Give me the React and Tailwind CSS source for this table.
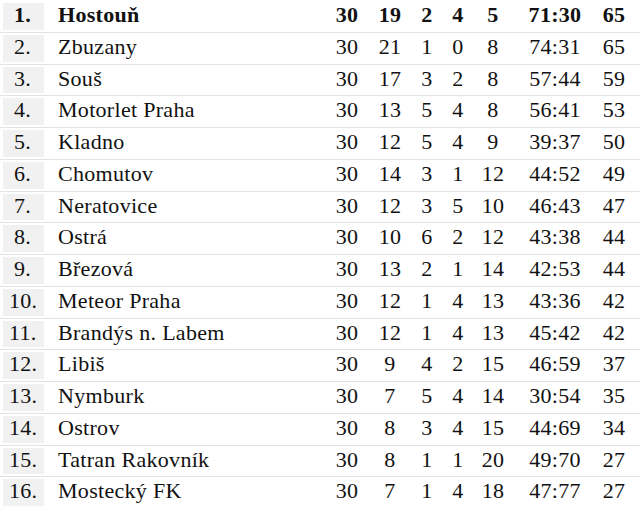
import React from "react";

const rows = [
  ["1.", "Hostouň", "30", "19", "2", "4", "5", "71:30", "65"],
  ["2.", "Zbuzany", "30", "21", "1", "0", "8", "74:31", "65"],
  ["3.", "Souš", "30", "17", "3", "2", "8", "57:44", "59"],
  ["4.", "Motorlet Praha", "30", "13", "5", "4", "8", "56:41", "53"],
  ["5.", "Kladno", "30", "12", "5", "4", "9", "39:37", "50"],
  ["6.", "Chomutov", "30", "14", "3", "1", "12", "44:52", "49"],
  ["7.", "Neratovice", "30", "12", "3", "5", "10", "46:43", "47"],
  ["8.", "Ostrá", "30", "10", "6", "2", "12", "43:38", "44"],
  ["9.", "Březová", "30", "13", "2", "1", "14", "42:53", "44"],
  ["10.", "Meteor Praha", "30", "12", "1", "4", "13", "43:36", "42"],
  ["11.", "Brandýs n. Labem", "30", "12", "1", "4", "13", "45:42", "42"],
  ["12.", "Libiš", "30", "9", "4", "2", "15", "46:59", "37"],
  ["13.", "Nymburk", "30", "7", "5", "4", "14", "30:54", "35"],
  ["14.", "Ostrov", "30", "8", "3", "4", "15", "44:69", "34"],
  ["15.", "Tatran Rakovník", "30", "8", "1", "1", "20", "49:70", "27"],
  ["16.", "Mostecký FK", "30", "7", "1", "4", "18", "47:77", "27"],
];

export default function App() {
  return (
    <div
      className="w-[640px] h-[507px] overflow-hidden bg-white text-[#111] text-[22px] leading-[22px] tracking-[0.3px]"
      style={{ fontFamily: '"Liberation Serif", "Times New Roman", serif' }}
    >
      <div className="mt-[1px] flex flex-col">
        {rows.map((r, i) => (
          <div
            key={i}
            className={`flex h-[31.75px] items-stretch border-b border-[#e2e2e2] ${i === 0 ? "font-bold" : ""}`}
          >
            <div
              className={`ml-[3px] my-[2px] w-[41px] bg-[#f1f1f1] pt-[1px] ${r[0].length > 2 ? "pl-[6px]" : "pl-[11px]"}`}
            >
              {r[0]}
            </div>
            <div className="w-[278px] pl-[14px] pt-[3px] whitespace-nowrap">{r[1]}</div>
            <div className="w-[50px] pt-[3px] text-center">{r[2]}</div>
            <div className="w-[36px] pt-[3px] text-center">{r[3]}</div>
            <div className="w-[38px] pt-[3px] text-center">{r[4]}</div>
            <div className="w-[24px] pt-[3px] text-center">{r[5]}</div>
            <div className="w-[46px] pt-[3px] text-center">{r[6]}</div>
            <div className="w-[78px] pt-[3px] text-center">{r[7]}</div>
            <div className="w-[40px] pt-[3px] text-center">{r[8]}</div>
          </div>
        ))}
      </div>
    </div>
  );
}
